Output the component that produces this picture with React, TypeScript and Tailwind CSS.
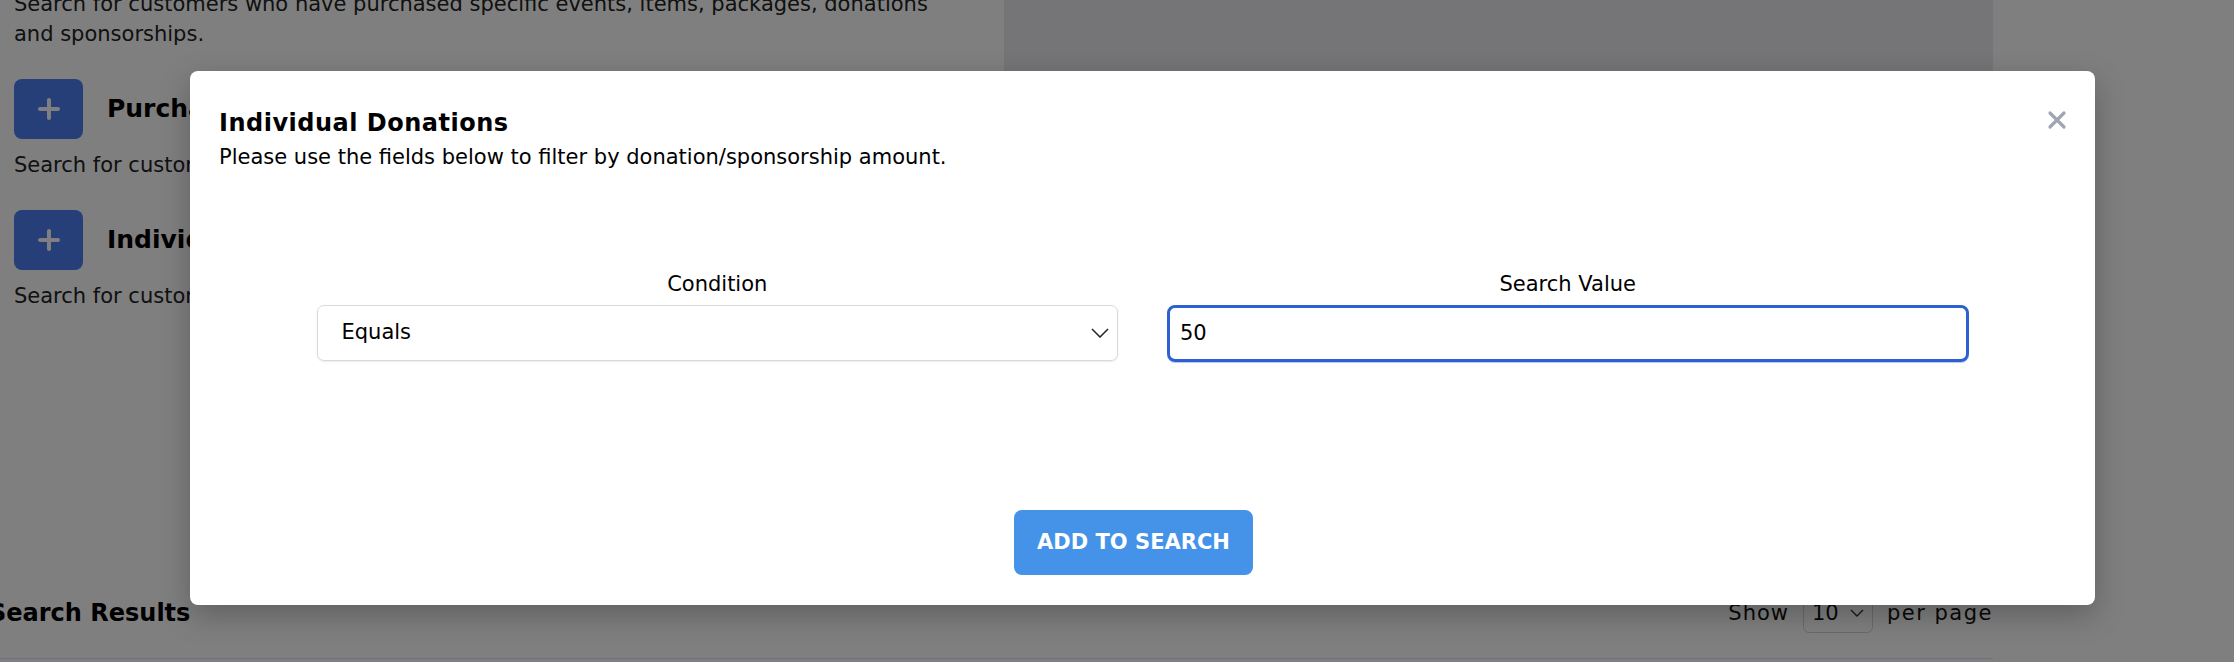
import React from "react";

function PlusButton() {
  return (
    <div className="w-[69px] h-[60px] rounded-[8px] bg-[#4c7ef2] flex items-center justify-center shrink-0">
      <svg width="22" height="22" viewBox="0 0 22 22">
        <path d="M11 2 V20 M2 11 H20" stroke="#ffffff" strokeWidth="4" strokeLinecap="round" />
      </svg>
    </div>
  );
}

function Item({ title, desc }: { title: string; desc: string }) {
  return (
    <div className="mt-[30px]">
      <div className="flex items-center gap-[24px]">
        <PlusButton />
        <div className="text-[25px] font-bold text-black leading-[36px] whitespace-nowrap">{title}</div>
      </div>
      <div className="mt-[11px] text-[21px] leading-[30px] text-[#222] whitespace-nowrap">{desc}</div>
    </div>
  );
}

export default function App() {
  return (
    <div className="relative w-[2234px] h-[662px] overflow-hidden bg-white font-['DejaVu_Sans',sans-serif] text-black">
      {/* underlying page */}
      <div className="flex flex-col h-full">
        <div className="flex h-[575px]">
          <div className="w-[990px] pl-[14px] shrink-0">
            <p className="-mt-[11px] text-[21px] leading-[30px] text-[#222] whitespace-nowrap">
              Search for customers who have purchased specific events, items, packages, donations
              <br />
              and sponsorships.
            </p>
            <Item title="Purchases" desc="Search for customers who have purchased specific events, items or packages." />
            <Item title="Individual Donations" desc="Search for customers who have made individual donations or sponsorships." />
          </div>
          <div className="ml-[14px] w-[989px] h-[520px] bg-[#eaeaee] shrink-0" />
        </div>
        <div className="flex items-center w-[1993px] h-[83px] pb-[7px]">
          <div className="-ml-[11px] text-[24px] font-bold leading-[36px] whitespace-nowrap">Search Results</div>
          <div className="ml-auto flex items-center text-[21px] leading-[30px] text-[#111]">
            <span className="tracking-[1px]">Show</span>
            <div className="ml-[14px] w-[70px] h-[40px] border border-[#d4d4d4] rounded-[6px] flex items-center px-[8px] justify-between">
              <span>10</span>
              <svg width="14" height="8" viewBox="0 0 14 8">
                <path d="M1 1 L7 7 L13 1" fill="none" stroke="#333" strokeWidth="1.4" />
              </svg>
            </div>
            <span className="ml-[14px] tracking-[1.5px]">per page</span>
          </div>
        </div>
        <div className="w-[1993px] h-[1px] bg-[#dde6ff]" />
        <div className="flex-1 bg-white" />
      </div>

      {/* overlay */}
      <div className="absolute inset-0 bg-black/50" />

      {/* modal */}
      <div className="absolute left-[190px] top-[71px] w-[1905px] h-[534px] bg-white rounded-[8px] shadow-[0_10px_30px_rgba(0,0,0,0.25)] px-[29px] pt-[35px]">
        <button className="absolute right-[28px] top-[39px] w-[20px] h-[20px] flex items-center justify-center">
          <svg width="20" height="20" viewBox="0 0 20 20">
            <path d="M3 3 L17 17 M17 3 L3 17" stroke="#a0a5b1" strokeWidth="3.2" strokeLinecap="round" />
          </svg>
        </button>
        <h2 className="text-[24px] font-bold leading-[34px] tracking-[0.5px] text-black">Individual Donations</h2>
        <p className="mt-[2px] text-[21px] leading-[30px] text-black">
          Please use the fields below to filter by donation/sponsorship amount.
        </p>

        <div className="mt-[97px] mx-auto w-[1652px] grid grid-cols-2 gap-x-[49px]">
          <div className="flex flex-col items-center">
            <label className="text-[21px] leading-[30px] text-black">Condition</label>
            <div className="mt-[6px] w-full h-[56px] border border-[#d9d9d9] rounded-[7px] shadow-[0_1px_2px_rgba(0,0,0,0.08)] flex items-center justify-between pl-[24px] pr-[8px]">
              <span className="text-[21px] text-black">Equals</span>
              <svg width="18" height="10" viewBox="0 0 18 10">
                <path d="M1 1 L9 9 L17 1" fill="none" stroke="#222" strokeWidth="1.5" />
              </svg>
            </div>
          </div>
          <div className="flex flex-col items-center">
            <label className="text-[21px] leading-[30px] text-black">Search Value</label>
            <div className="mt-[6px] w-full h-[57px] border-[3px] border-[#2d60d2] rounded-[8px] shadow-[0_1px_0_#b7cbf2] flex items-center pl-[10px]">
              <span className="text-[21px] text-black">50</span>
            </div>
          </div>
        </div>

        <div className="mt-[148px] flex justify-center pr-[18px]">
          <button className="w-[239px] h-[65px] rounded-[8px] bg-[#4493e8] text-white text-[21px] font-bold uppercase">
            Add to search
          </button>
        </div>
      </div>
    </div>
  );
}
